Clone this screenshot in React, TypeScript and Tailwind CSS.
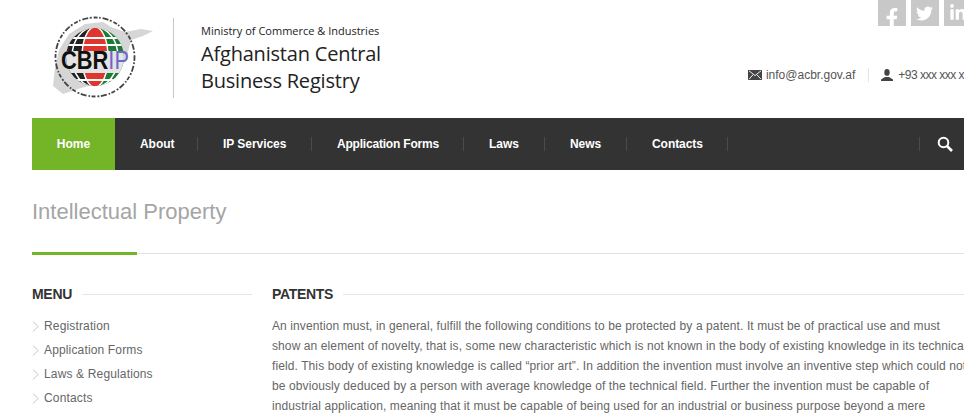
import React from 'react';
import { FaFacebookF, FaTwitter, FaLinkedinIn } from 'react-icons/fa';

const navItems = [
  { label: 'About', width: 'w-[57px]' },
  { label: 'IP Services', width: 'w-[88px]' },
  { label: 'Application Forms', width: 'w-[126px] tracking-[-0.2px]' },
  { label: 'Laws', width: 'w-[55px]' },
  { label: 'News', width: 'w-[56px]' },
  { label: 'Contacts', width: 'w-[75px]' },
];
const menuItems = ['Registration', 'Application Forms', 'Laws & Regulations', 'Contacts'];

const Logo = () => (
  <svg width="115" height="95" viewBox="0 0 115 95" className="shrink-0">
    <defs>
      <clipPath id="globe">
        <circle cx="50" cy="47" r="29" />
      </clipPath>
    </defs>
    <path d="M10 58 L14 40 L24 24 L40 14 L58 12 L66 17 L80 22 L96 19 L108 21 L98 26 L86 30 L82 46 L72 62 L58 72 L36 78 L18 84 L8 76 Z" fill="#d6d6d6" />
    <circle cx="50" cy="47" r="39.5" fill="none" stroke="#444" strokeWidth="1.8" strokeDasharray="4 1.5 1.5 2 6 1.5 2 2" />
    <g clipPath="url(#globe)">
      <rect x="20" y="17" width="30" height="60" fill="#222" />
      <rect x="50" y="17" width="30" height="60" fill="#1d7a35" />
      <ellipse cx="50" cy="47" rx="13" ry="30" fill="#e0342f" stroke="#fff" strokeWidth="1.5" />
      <ellipse cx="50" cy="47" rx="23" ry="30" fill="none" stroke="#fff" strokeWidth="1.5" />
      <rect x="20" y="27" width="60" height="2" fill="#fff" />
      <rect x="20" y="34" width="60" height="2" fill="#fff" />
      <rect x="20" y="41" width="60" height="22" fill="#e4e4e4" />
      <rect x="20" y="69" width="60" height="2" fill="#fff" />
    </g>
    <text x="16" y="59" fontFamily="'Liberation Sans', sans-serif" fontWeight="700" fontSize="26" textLength="68" lengthAdjust="spacingAndGlyphs" fill="#111">
      CBR<tspan fontWeight="400" fill="#6f66c8">IP</tspan>
    </text>
  </svg>
);

const Envelope = () => (
  <svg width="14" height="10" viewBox="0 0 14 10" className="shrink-0">
    <path d="M0 0H14V10H0Z" fill="#444" />
    <path d="M1 .8 7 5.6 13 .8M1 9.2 5.2 4.6M13 9.2 8.8 4.6" fill="none" stroke="#fff" strokeWidth=".9" />
  </svg>
);

const Person = () => (
  <svg width="12" height="12" viewBox="0 0 12 12" className="shrink-0">
    <ellipse cx="6" cy="3.4" rx="2.7" ry="3.4" fill="#444" />
    <path d="M0 12V10.4L4 8H8L12 10.4V12Z" fill="#444" />
  </svg>
);

const SearchIcon = () => (
  <svg width="16" height="16" viewBox="0 0 16 16" className="shrink-0">
    <circle cx="6.5" cy="6.5" r="4.8" fill="none" stroke="#fff" strokeWidth="2" />
    <path d="M10 10 15 15" stroke="#fff" strokeWidth="2.6" />
  </svg>
);

const Chevron = () => (
  <svg width="7" height="11" viewBox="0 0 7 11" className="shrink-0">
    <path d="M1 .5 6 5.5 1 10.5" fill="none" stroke="#c4c4c4" />
  </svg>
);

const SectionTitle = ({ children }: { children: React.ReactNode }) => (
  <div className="flex items-center gap-[10px] h-[20px]">
    <h3 className="text-[14px] font-bold text-[#333] tracking-[-0.3px]">{children}</h3>
    <div className="flex-1 h-px bg-[#e6e6e6]" />
  </div>
);

export default function App() {
  return (
    <div className="w-[964px] h-[418px] overflow-hidden bg-white font-['Liberation_Sans',Arial,sans-serif]">
      <div className="w-[1170px] ml-[32px]">
        <header className="flex h-[118px]">
          <div className="pl-[13px] pt-[10px]">
            <Logo />
          </div>
          <div className="w-px h-[80px] mt-[18px] ml-[13px] bg-[#c9c9c9]" />
          <div className="ml-[27px] pt-[24px] font-['Open_Sans',sans-serif] text-[#222]">
            <p className="text-[11px] leading-[14px]">Ministry of Commerce &amp; Industries</p>
            <p className="text-[20px] leading-[27px] mt-[2px] tracking-[-0.2px]">Afghanistan Central<br />Business Registry</p>
          </div>
          <div className="ml-[367px] flex flex-col">
            <div className="flex gap-[5px] pl-[130px]">
              <span className="w-[28px] h-[26px] bg-[#c8c8c8] text-white flex items-end justify-center overflow-hidden"><FaFacebookF size={20} className="mb-[-2px]" /></span>
              <span className="w-[28px] h-[26px] bg-[#c8c8c8] text-white flex items-center justify-center"><FaTwitter size={17} /></span>
              <span className="w-[28px] h-[26px] bg-[#c8c8c8] text-white flex items-center justify-center"><FaLinkedinIn size={18} /></span>
            </div>
            <div className="flex items-center mt-[41px] h-[16px] text-[12px] text-[#555]">
              <Envelope />
              <span className="ml-[4px]">info@acbr.gov.af</span>
              <div className="w-px h-[14px] bg-[#e5e5e5] ml-[13px] mr-[12px]" />
              <Person />
              <span className="ml-[5px] whitespace-nowrap tracking-[-0.5px]">+93 xxx xxx xxx</span>
            </div>
          </div>
        </header>

        <nav className="flex items-center h-[52px] bg-[#333] text-white text-[12px] font-bold">
          <a className="w-[83px] h-full flex items-center justify-center bg-[#74b528]">Home</a>
          <div className="flex items-center pl-[25px] tracking-[-0.05px]">
            {navItems.map((item) => (
              <div key={item.label} className="flex items-center">
                <a className={`${item.width} whitespace-nowrap`}>{item.label}</a>
                <div className="w-px h-[14px] bg-[#4a4a4a] mr-[25px]" />
              </div>
            ))}
          </div>
          <div className="w-px h-[14px] bg-[#4a4a4a] ml-[166px]" />
          <div className="ml-[17px]">
            <SearchIcon />
          </div>
        </nav>

        <div className="relative h-[84px] border-b border-[#e2e2e2]">
          <h1 className="pt-[30px] text-[22px] leading-[24px] text-[#a5a5a5]">Intellectual Property</h1>
          <div className="absolute left-0 bottom-[-2px] w-[105px] h-[3px] bg-[#74b528]" />
        </div>

        <div className="flex gap-[20px] pt-[30px]">
          <aside className="w-[220px] shrink-0">
            <SectionTitle>MENU</SectionTitle>
            <ul className="mt-[10px] text-[12px] text-[#666] tracking-[0.15px]">
              {menuItems.map((item) => (
                <li key={item} className="flex items-center h-[24px]">
                  <Chevron />
                  <span className="ml-[5px]">{item}</span>
                </li>
              ))}
            </ul>
          </aside>
          <main className="w-[730px] shrink-0">
            <SectionTitle>PATENTS</SectionTitle>
            <p className="mt-[12px] w-[697px] text-[12px] leading-[20px] text-[#666] tracking-[0.1px]">
              An invention must, in general, fulfill the following conditions to be protected by a patent. It must be of practical use and must show an element of novelty, that is, some new characteristic which is not known in the body of existing knowledge in its technical field. This body of existing knowledge is called “prior art”. In addition the invention must involve an inventive step which could not be obviously deduced by a person with average knowledge of the technical field. Further the invention must be capable of industrial application, meaning that it must be capable of being used for an industrial or business purpose beyond a mere theoretical phenomenon.
            </p>
          </main>
        </div>
      </div>
    </div>
  );
}
